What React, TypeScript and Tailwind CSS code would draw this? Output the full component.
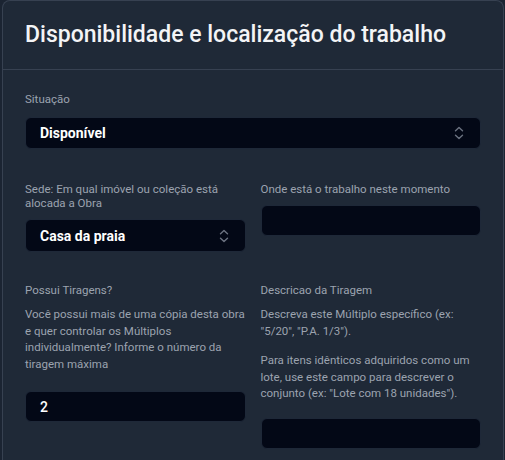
import React from "react";

const ChevronUpDown = () => (
  <svg width="10" height="14" viewBox="0 0 10 14" fill="none" stroke="#6b7280" strokeWidth="1.4" strokeLinecap="round" strokeLinejoin="round">
    <path d="M1.5 4.8 5 1.5l3.5 3.3" />
    <path d="M1.5 9.2 5 12.5l3.5-3.3" />
  </svg>
);

const Select = ({ value, h = "h-8" }: { value: string; h?: string }) => (
  <div
    className={`flex items-center justify-between ${h} rounded-md border border-[#1e2838] bg-[#030816] pl-[14px] pr-[16px]`}
  >
    <span className="text-sm font-bold text-white">{value}</span>
    <ChevronUpDown />
  </div>
);

const Input = ({ value }: { value?: string }) => (
  <div className="flex items-center h-[31px] rounded-md border border-[#1e2838] bg-[#030816] px-[14px]">
    <span className="text-sm font-medium text-white">{value}</span>
  </div>
);

export default function App() {
  return (
    <div
      className="w-[505px] h-[460px] overflow-hidden bg-[#1b2432] pl-[2px] pr-[1px]"
      style={{ fontFamily: "Roboto, 'Noto Sans', sans-serif" }}
    >
      <div className="h-full rounded-t-lg border border-b-0 border-[#374151] bg-[#1f2937]">
        <div className="border-b border-[#374151] px-[22px] py-[18px]">
          <h1 className="text-[23px] leading-8 font-medium text-[#f3f4f6]">
            Disponibilidade e localização do trabalho
          </h1>
        </div>

        <div className="px-[22px] pt-[22px]">
          <div>
            <label className="block mb-[11px] text-[11.5px] leading-[14px] text-[#9ca3af]">Situação</label>
            <Select value="Disponível" />
          </div>

          <div className="mt-[33px] grid grid-cols-2 gap-x-[15px] items-start">
            <div>
              <label className="block mb-[9px] text-[11.5px] leading-[14px] text-[#9ca3af]">
                Sede: Em qual imóvel ou coleção está alocada a Obra
              </label>
              <Select value="Casa da praia" h="h-[33px]" />
            </div>
            <div>
              <label className="block mb-[9px] text-[11.5px] leading-[14px] text-[#9ca3af]">
                Onde está o trabalho neste momento
              </label>
              <Input />
            </div>
          </div>

          <div className="mt-[31px] grid grid-cols-2 gap-x-[15px] items-start">
            <div>
              <label className="block text-[11.5px] leading-[14px] text-[#9ca3af]">Possui Tiragens?</label>
              <p className="mt-[9px] text-[11.5px] leading-[16.5px] text-[#9ca3af]">
                Você possui mais de uma cópia desta obra e quer controlar os Múltiplos individualmente? Informe o
                número da tiragem máxima
              </p>
              <div className="mt-[19px]">
                <Input value="2" />
              </div>
            </div>
            <div>
              <label className="block text-[11.5px] leading-[14px] text-[#9ca3af]">Descricao da Tiragem</label>
              <p className="mt-[9px] text-[11.5px] leading-[16.5px] text-[#9ca3af]">
                Descreva este Múltiplo específico (ex: "5/20", "P.A. 1/3").
              </p>
              <p className="mt-[13px] text-[11.5px] leading-[16.5px] text-[#9ca3af]">
                Para itens idênticos adquiridos como um lote, use este campo para descrever o conjunto (ex: "Lote com
                18 unidades").
              </p>
              <div className="mt-[16px]">
                <Input />
              </div>
            </div>
          </div>
        </div>
      </div>
    </div>
  );
}
